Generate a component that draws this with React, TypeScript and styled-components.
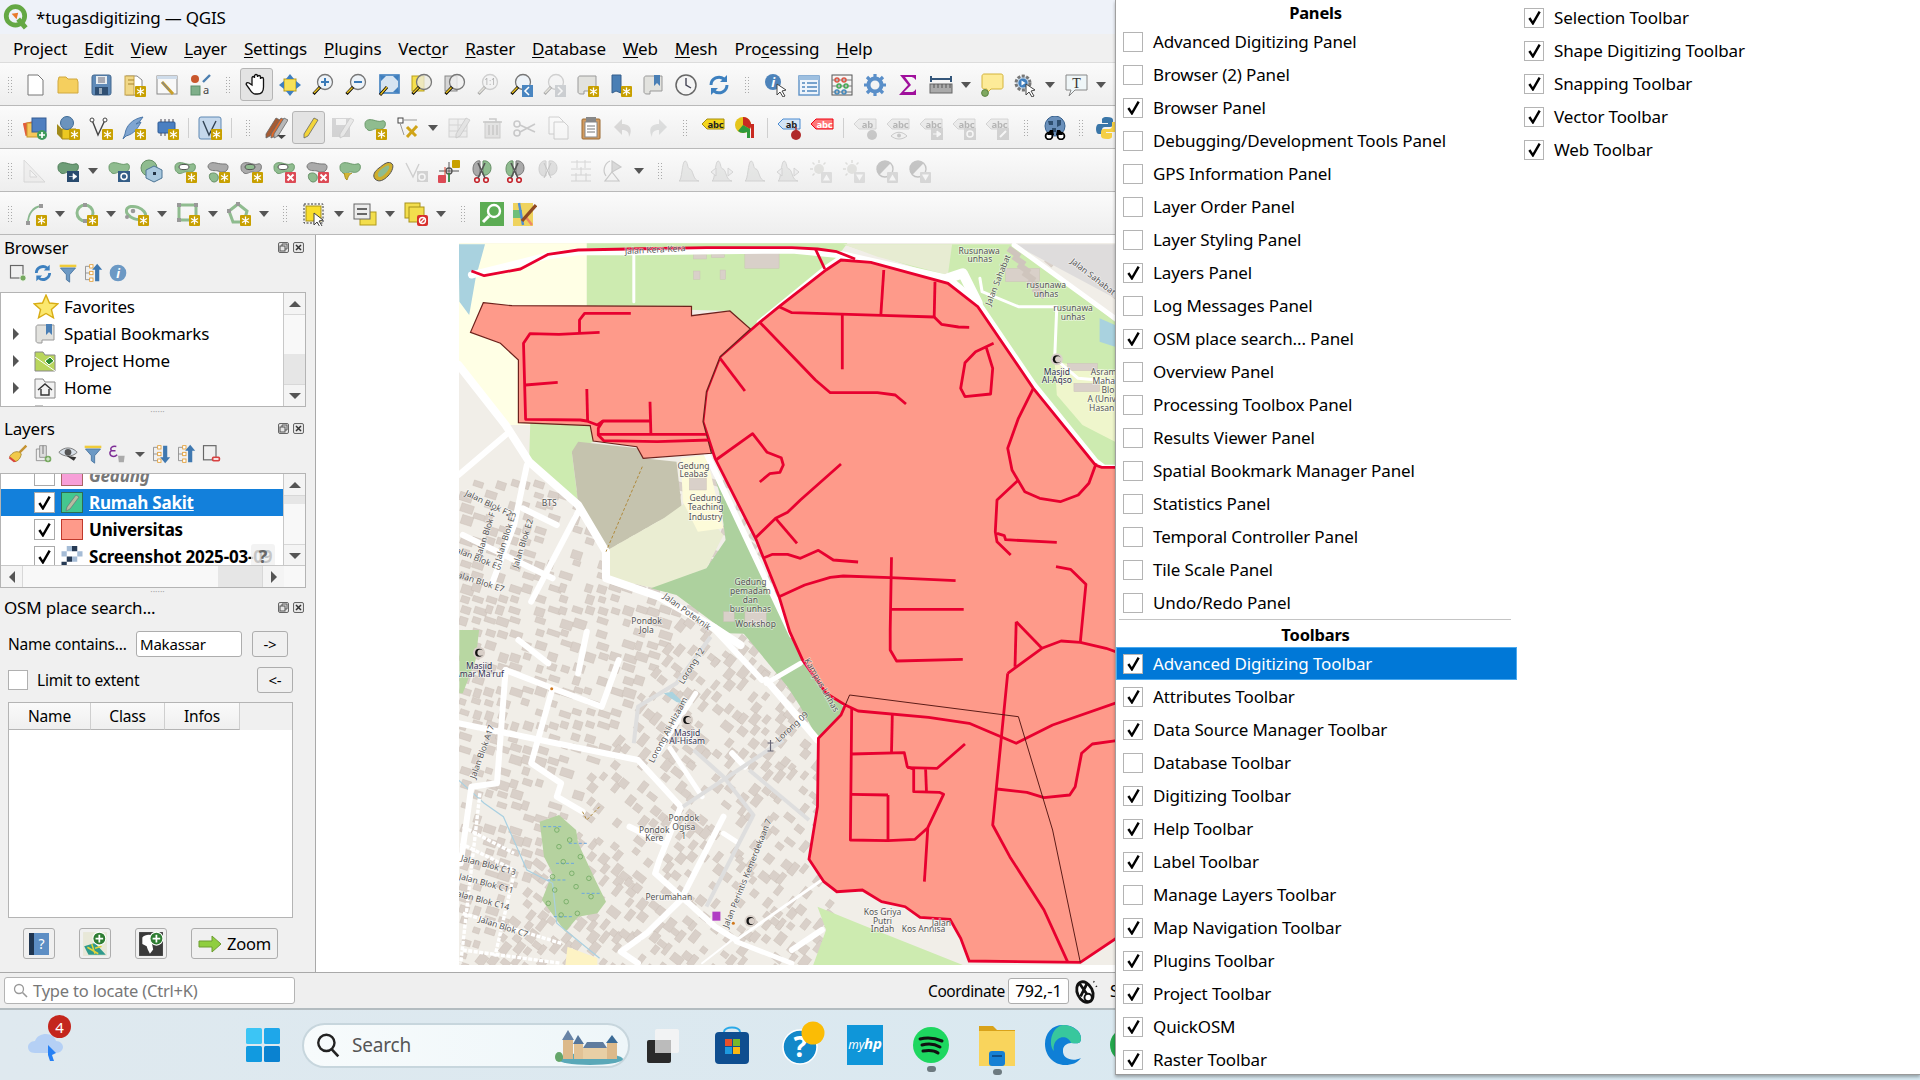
import React from "react";
import styled, { createGlobalStyle } from "styled-components";

const FONT = `"Noto Sans", "Open Sans", "Liberation Sans", sans-serif`;

const Global = createGlobalStyle`
  html, body { margin: 0; padding: 0; background: #f0f0f0; }
  * { box-sizing: border-box; }
`;

/* ---------- page frame ---------- */
const Page = styled.div`
  position: relative; width: 1920px; height: 1080px; overflow: hidden;
  font-family: ${FONT}; font-size: 17px; color: #000; letter-spacing: -0.2px;
`;
const TitleBar = styled.div`
  height: 34px; background: #eef2f9; display: flex; align-items: center; padding-left: 3px; gap: 7px; font-size: 17px;
`;
const MenuBar = styled.div`
  height: 29px; background: #f0f0f0; display: flex; align-items: center; padding-left: 13px; gap: 17px; border-bottom: 1px solid #dcdcdc;
`;
const MenuLabel = styled.span` u { text-underline-offset: 2px; } `;

const ToolRow = styled.div`
  height: 43px; display: flex; align-items: center; padding: 1px 0 0 2px; overflow: hidden;
  background: linear-gradient(#fbfbfb, #eeeeee); border-bottom: 1.5px solid #b9b9b9;
`;
const ToolSlot = styled.span<{ $off?: boolean; $on?: boolean }>`
  flex: none; width: 33px; height: 33px; display: flex; align-items: center; justify-content: center; border-radius: 3px;
  ${p => p.$on ? "background:#e3e3e3; border:1px solid #b5b5b5;" : ""}
  svg { display: block; ${p => p.$off ? "opacity:.3; filter:grayscale(.85);" : ""} }
`;
const Caret = styled.span`
  flex: none; width: 18px; display: flex; justify-content: center;
  &::after { content: ""; border-left: 5.5px solid transparent; border-right: 5.5px solid transparent; border-top: 6px solid #555; }
`;
const GripSlot = styled.span<{ $w: number }>`
  flex: none; width: ${p => p.$w}px; display: flex; justify-content: center;
  &::after { content: ""; width: 6px; height: 18px; background: radial-gradient(circle, #aaa 0.7px, transparent 0.9px) 0 0 / 3px 3px; }
`;
const SepSlot = styled.span`
  flex: none; width: 10px; display: flex; justify-content: center;
  &::after { content: ""; width: 1px; height: 20px; background: #cfcfcf; }
`;

const Workspace = styled.div` height: 737px; display: flex; `;
const Dock = styled.div`
  width: 316px; flex: none; background: #f0f0f0; border-right: 1px solid #a9a9a9; display: flex; flex-direction: column;
`;
const DockTitle = styled.div`
  height: 24px; padding: 0 6px 0 4px; display: flex; align-items: center; justify-content: space-between; font-size: 17px; flex: none;
`;
const DockButtons = styled.span` display: flex; gap: 4px; margin-right: 5px; `;
const MiniRow = styled.div` height: 28px; display: flex; align-items: center; padding-left: 8px; gap: 5px; flex: none; `;
const MiniIcon = styled.span` width: 20px; height: 20px; flex: none; svg { display: block; } `;
const MiniCaret = styled(Caret)` width: 13px; margin: 0; &::after{ border-left-width:5px; border-right-width:5px; border-top-width:5px;} `;

const TreeBox = styled.div<{ $mt: number }>`
  position: relative; height: 115px; flex: none; margin-top: ${p => p.$mt}px; width: 306px; background: #fff; border: 1px solid #b4b4b4; overflow: hidden; display: flex;
`;
const TreeBody = styled.div` flex: 1; min-width: 0; overflow: hidden; `;
const TreeRow = styled.div` height: 27px; display: flex; align-items: center; position: relative; white-space: nowrap; `;
const Expander = styled.span<{ $show?: boolean }>`
  width: 32px; flex: none; padding-left: 12px; display: flex;
  &::after { content: ""; ${p => p.$show ? "border-left: 6px solid #555;" : ""} border-top: 6px solid transparent; border-bottom: 6px solid transparent; }
`;
const TreeIcon = styled.span` width: 31px; flex: none; display:flex; svg{display:block;} `;
const VBar = styled.div<{ $short?: boolean }>`
  width: 22px; flex: none; border-left: 1px solid #c8c8c8; background: #f8f8f8; display: flex; flex-direction: column; ${p => p.$short ? "margin-bottom: 21px;" : ""}
`;
const BarBtn = styled.span<{ $dir: "up" | "down" | "left" | "right" }>`
  flex: none; width: 21px; height: 21px; display: flex; align-items: center; justify-content: center; background: #f4f4f4;
  &::after { content: ""; ${p => p.$dir === "up" ? "border-left:6px solid transparent;border-right:6px solid transparent;border-bottom:6px solid #555;" :
    p.$dir === "down" ? "border-left:6px solid transparent;border-right:6px solid transparent;border-top:6px solid #555;" :
    p.$dir === "left" ? "border-top:6px solid transparent;border-bottom:6px solid transparent;border-right:6px solid #555;" :
    "border-top:6px solid transparent;border-bottom:6px solid transparent;border-left:6px solid #555;"} }
`;
const BarTrack = styled.span<{ $top: number; $len: number }>`
  flex: 1; background: linear-gradient(to bottom, transparent ${p => p.$top}px, #e6e6e6 ${p => p.$top}px, #e6e6e6 ${p => p.$top + p.$len}px, transparent ${p => p.$top + p.$len}px);
  border-top: 1px solid #d8d8d8; border-bottom: 1px solid #d8d8d8;
`;
const HBar = styled.div`
  position: absolute; left: 0; right: 0; bottom: 0; height: 22px; display: flex; align-items: center; background: #f8f8f8; border-top: 1px solid #c8c8c8;
`;
const HTrack = styled.span` flex: 1; height: 100%; background: linear-gradient(to right, transparent 195px, #e6e6e6 195px, #e6e6e6 242px, transparent 242px); border-left: 1px solid #d8d8d8; border-right: 1px solid #d8d8d8; `;
const HCorner = styled.span` width: 21px; flex: none; `;
const Splitter = styled.div<{ $h: number }>`
  height: ${p => p.$h}px; flex: none; display: flex; align-items: center; justify-content: center;
  &::after { content: "······"; color: #aaa; font-size: 9px; letter-spacing: 0; line-height: 1; }
`;
const LayerRows = styled.div` margin-top: -12px; `;
const LayerRow = styled(TreeRow)<{ $sel?: boolean }>`
  padding-left: 33px; gap: 6px; font-weight: 700; ${p => p.$sel ? "background:#1380db; color:#fff;" : ""}
`;
const LayerCheck = styled.span`
  width: 21px; height: 21px; flex: none; background: #fff; border: 1px solid #aaa; display: flex; align-items: center; justify-content: center;
`;
const LayerName = styled.span<{ $muted?: boolean; $active?: boolean }>`
  ${p => p.$muted ? "color:#777; font-style:italic;" : ""} ${p => p.$active ? "text-decoration: underline;" : ""}
`;
const Swatch = styled.span<{ $c: string; $b: string }>` width: 22px; height: 21px; flex: none; background: ${p => p.$c}; border: 1px solid ${p => p.$b}; display:flex; align-items:center; justify-content:center; `;
const Tip = styled.span`
  position: absolute; left: 250px; top: 1px; width: 24px; height: 25px; background: rgba(240,240,240,.82); color: #666; border-radius: 3px; text-align: center; font-weight: 700; font-size: 18px; line-height: 25px;
`;

const OsmBody = styled.div` padding: 12px 0 0 8px; display: flex; flex-direction: column; flex: 1; `;
const OsmLine = styled.div<{ $mb: number }>` display: flex; align-items: center; margin-bottom: ${p => p.$mb}px; `;
const OsmLabel = styled.span` width: 128px; flex: none; font-size: 15.5px; `;
const TextInput = styled.span<{ $w: number }>`
  width: ${p => p.$w}px; height: 26px; background: #fff; border: 1px solid #adadad; border-radius: 3px; display: flex; align-items: center; padding-left: 3px; font-size: 15px; flex: none;
`;
const GhostBtn = styled.span<{ $ml: number }>`
  width: 36px; height: 26px; margin-left: ${p => p.$ml}px; background: #f0f0f0; border: 1px solid #adadad; border-radius: 3px; display: flex; align-items: center; justify-content: center; font-size: 15px; flex: none;
`;
const BoxCheck = styled.span` width: 20px; height: 20px; background: #fff; border: 1px solid #b0b0b0; flex: none; `;
const CheckText = styled.span` margin-left: 9px; width: 220px; flex: none; font-size: 15.5px; `;
const ResultTable = styled.div` width: 285px; height: 216px; background: #fff; border: 1px solid #b4b4b4; `;
const HeadRow = styled.div` height: 27px; display: flex; background: #f0f0f0; `;
const HeadCell = styled.span<{ $w: number }>`
  width: ${p => p.$w}px; display: flex; align-items: center; justify-content: center; background: linear-gradient(#fafafa,#efefef); border-right: 1px solid #cfcfcf; border-bottom: 1px solid #b4b4b4; font-size: 15.5px;
`;
const OsmButtons = styled.div` display: flex; margin: 10px 0 0 15px; gap: 24px; `;
const IconBtn = styled.span`
  width: 32px; height: 31px; background: #f0f0f0; border: 1px solid #adadad; border-radius: 3px; display: flex; align-items: center; justify-content: center; flex: none;
`;
const ZoomBtn = styled(IconBtn)` width: 87px; gap: 5px; font-size: 16.5px; `;

const Canvas = styled.div` flex: 1; background: #fff; overflow: hidden; svg { display: block; } `;

const StatusBar = styled.div`
  height: 38px; background: #efefef; border-top: 1px solid #a9a9a9; border-bottom: 2px solid #b3bcc0; display: flex; align-items: center; padding-left: 4px; white-space: nowrap;
`;
const Locator = styled.div`
  width: 291px; height: 27px; background: #fff; border: 1px solid #b4b4b4; border-radius: 3px; display: flex; align-items: center; padding-left: 8px; gap: 5px; color: #777; font-size: 16.5px; flex: none;
`;
const CoordLabel = styled.span` margin-left: 633px; width: 80px; flex: none; font-size: 15.5px; letter-spacing: -0.4px; `;
const CoordInput = styled.span`
  width: 61px; height: 26px; flex: none; background: #fff; border: 1px solid #adadad; border-radius: 3px; display: flex; align-items: center; justify-content: center; font-size: 16.5px;
`;
const ScaleLabel = styled.span` margin-left: 8px; font-size: 16.5px; `;

const Taskbar = styled.div`
  height: 70px; background: linear-gradient(90deg, #dfe9ef, #d6e8f1); display: flex; align-items: center; position: relative;
`;
const TaskIcon = styled.span<{ $w: number; $ml?: number }>` width: ${p => p.$w}px; margin-left: ${p => p.$ml ?? 0}px; flex: none; display: flex; justify-content: center; position: relative; svg { display: block; } `;
const SearchPill = styled.div`
  width: 328px; height: 45px; flex: none; background: linear-gradient(90deg, #f7fbfc, #eef6f9); border: 2px solid #c7d6dd; border-radius: 23px; display: flex; align-items: center; padding-left: 11px; gap: 11px; color: #555; font-size: 19px; margin: 0 0 0 21px; position: relative;
`;
const CastleWrap = styled.span` position: absolute; right: 3px; top: 2px; `;
const Badge = styled.span`
  position: absolute; left: 48px; top: -12px; width: 23px; height: 23px; background: #c4261d; color: #fff; border-radius: 50%; display:flex; align-items:center; justify-content:center; font-size: 15px;
`;
const RunDot = styled.span` position: absolute; left: 50%; bottom: -9px; width: 9px; height: 6px; margin-left: -4px; background: #6d7a80; border-radius: 3px; `;

/* ---------- context menu ---------- */
const ViewMenu = styled.div`
  position: absolute; left: 1115px; top: 0; width: 805px; height: 1075px; background: #fff; border-left: 1px solid #a0a0a0; border-bottom: 1px solid #9a9a9a; box-shadow: 0 2px 3px rgba(0,0,0,.3); display: flex;
`;
const MenuCol = styled.div<{ $w: number; $pt?: number }>` width: ${p => p.$w}px; flex: none; padding-top: ${p => p.$pt ?? 0}px; `;
const MenuHead = styled.div` height: 25px; text-align: center; font-weight: 700; font-size: 16.5px; line-height: 26px; margin-left: -2px; `;
const MenuHeadT = styled(MenuHead)` height: 27px; line-height: 29px; `;
const MenuDivider = styled.div` height: 1px; margin: 0 6px 0 3px; background: #c4c4c4; `;
const MenuRow = styled.div<{ $hi?: boolean }>`
  height: 33px; display: flex; align-items: center; padding-left: 7px; gap: 10px; font-size: 17px; letter-spacing: -0.13px; white-space: nowrap;
  ${p => p.$hi ? "background:#0078d7; color:#fff; outline:1px solid #4aa9ef; outline-offset:-1px;" : ""}
`;
const MenuCheck = styled.span` width: 20px; height: 20px; flex: none; background: #fff; border: 1.5px solid #b4b4b4; display:flex; align-items:center; justify-content:center; `;

const Tick = ({ s = 15 }: { s?: number }) => (
  <svg width={s} height={s} viewBox="0 0 16 16"><path d="M2.5 8.5L6.3 14.2 13.5 1.8" fill="none" stroke="#000" strokeWidth="2.6" /></svg>
);

/* ---------- icon drawings ---------- */
const Gold = () => (
  <g><rect x="13" y="13" width="11" height="11" rx="1" fill="#c8a000" /><path d="M18.5 14.5v8M15 16.5l7 4M22 16.5l-7 4" stroke="#fff" strokeWidth="1.3" /></g>
);
const RedX = () => (
  <g><rect x="13" y="13" width="11" height="11" rx="1" fill="#dc4a55" /><path d="M15.5 15.5l6 6M21.5 15.5l-6 6" stroke="#fff" strokeWidth="2" /></g>
);
const Blob = ({ c = "#8fbc8f", s = "#6b9a6b" }: { c?: string; s?: string }) => (
  <path d="M2 8c0-4 4-5 8-4s6 2 9 1 4 2 3 5-5 4-8 3-6 3-9 1-3-4-3-6z" fill={c} stroke={s} />
);
const Scroll = () => <path d="M5 3h16v15H9v3H6c-2 0-3-1-3-2V5c0-1 1-2 2-2z" fill="#e2e2de" stroke="#999" />;
const Glass = ({ children, fill = "#eef3f8" }: { children?: React.ReactNode; fill?: string }) => (
  <g>
    <circle cx="14" cy="9" r="7.5" fill={fill} stroke="#777" strokeWidth="1.3" />
    {children}
    <path d="M9 14L2.5 21" stroke="#000" strokeWidth="3" /><path d="M8.5 14.5L3 20" stroke="#e8c022" strokeWidth="1.6" />
  </g>
);
const Cursor = () => <path d="M13 11l9 6-4 1 3 5-2 1-3-5-3 3z" fill="#fff" stroke="#444" />;
const AbcTag = ({ c, b, t = "abc", tc = "#222" }: { c: string; b: string; t?: string; tc?: string }) => (
  <g>
    <path d="M1 8l5-5h17v10H6z" fill={c} stroke={b} />
    <text x="14.5" y="11.5" fontSize="9.5" fontWeight="700" textAnchor="middle" fill={tc} fontFamily={FONT}>{t}</text>
  </g>
);
const Pencil = ({ c, dx = 0 }: { c: string; dx?: number }) => (
  <g transform={`translate(${dx} 0)`}><path d="M17 2l4 2-10 16-4 2 0-4z" fill={c} stroke="#666" strokeWidth=".8" /></g>
);
const Scissors = () => (
  <g fill="none" stroke="#c4222a" strokeWidth="1.6"><circle cx="7" cy="21" r="2.3" /><circle cx="16" cy="21" r="2.3" /><path d="M8 19L15 4M15 19L8 4" stroke="#555" /></g>
);
const Hist = ({ arrows }: { arrows?: boolean }) => (
  <g><path d="M2 22c3 0 3-20 6-20s2 8 5 8 3 12 9 12z" fill="#bfc9bf" stroke="#888" />{arrows ? <path d="M1 13l5-4v8zM23 13l-5-4v8z" fill="#dde" stroke="#888" /> : null}</g>
);
const Sun = ({ up }: { up: boolean }) => (
  <g><circle cx="10" cy="10" r="5" fill="#b9b98a" /><path d="M10 1v3M1 10h3M3.5 3.5l2 2M16.5 3.5l-2 2M3.5 16.5l2-2" stroke="#a7a77c" strokeWidth="1.5" /><rect x="12" y="13" width="11" height="11" rx="1" fill="#aaa" /><path d={up ? "M14 21.5l3.5-6 3.5 6z" : "M14 15.5l3.5 6 3.5-6z"} fill="#fff" /></g>
);
const Contrast = ({ up }: { up: boolean }) => (
  <g><circle cx="10" cy="10" r="8" fill="#eee" stroke="#555" strokeWidth="1.4" /><path d="M10 2a8 8 0 0 0-5.6 13.7L15.6 4.3A8 8 0 0 0 10 2z" fill="#555" /><rect x="12" y="13" width="11" height="11" rx="1" fill="#999" /><path d={up ? "M14 21.5l3.5-6 3.5 6z" : "M14 15.5l3.5 6 3.5-6z"} fill="#fff" /></g>
);
const ArcPair = ({ w = 3 }: { w?: number }) => (
  <g fill="none" stroke="#3d80bf" strokeWidth={w}>
    <path d="M4 12a8 8 0 0 1 13-6" /><path d="M20 12a8 8 0 0 1-13 6" />
    <path d="M20 2v7h-7z" fill="#3d80bf" stroke="none" /><path d="M4 22v-7h7z" fill="#3d80bf" stroke="none" />
  </g>
);

const ICONS: Record<string, React.ReactNode> = {
  newdoc: <path d="M5 2h10l5 5v15H5z" fill="#fff" stroke="#777" />,
  folder: <path d="M2 8l1-4h7l2 2h9l1 3v11H2z" fill="#f5cf5e" stroke="#d0a83e" />,
  save: <g><rect x="3" y="2" width="19" height="20" rx="2" fill="#5f8ab8" stroke="#44688f" /><rect x="7" y="3" width="11" height="8" fill="#e9eef2" /><path d="M9 5h7M9 7h7M9 9h7" stroke="#667" /><rect x="6" y="14" width="13" height="8" fill="#2f4f73" /><rect x="10" y="15" width="3" height="6" fill="#9ab" /></g>,
  saveas: <g><path d="M4 3h11l5 4v15H4z" fill="#fff" stroke="#888" /><rect x="3" y="3" width="9" height="19" fill="#f1d888" stroke="#c4a24b" /><path d="M6 7h6M6 11h6" stroke="#a8842c" /><Gold /></g>,
  props: <g><rect x="2" y="3" width="20" height="18" fill="#f8f8f8" stroke="#888" /><rect x="2" y="3" width="20" height="3" fill="#cfdcea" /><path d="M7 9l11 12" stroke="#c89f2a" strokeWidth="3" /><path d="M7 9l7 8" stroke="#888" strokeWidth="1.4" /></g>,
  styles: <g><circle cx="7" cy="6" r="4" fill="#c9572c" /><rect x="3" y="13" width="9" height="9" fill="#7faf8a" stroke="#5c8e6b" /><path d="M15 9l7-7" stroke="#4c7fb0" strokeWidth="2.4" /><text x="15" y="21" fontSize="11" fill="#444" fontFamily={FONT}>a</text></g>,
  pan: <path d="M7 12V5c0-2 2.5-2 2.5 0v-2c0-2 3-2 3 0v1c0-2 3-2 3 0v2c0-2 3-2 3 0v8c0 4-2 7-6 7h-2c-3 0-4-2-6-5l-3-4c-1-2 1-3 2.5-2z" fill="#fff" stroke="#111" strokeWidth="1.3" />,
  panSel: <g><rect x="6" y="6" width="12" height="12" fill="#f7e158" stroke="#b59b1f" /><path d="M12 1l4 5H8zM12 23l4-5H8zM1 12l5-4v8zM23 12l-5-4v8z" fill="#3f7fbf" /></g>,
  zoomIn: <Glass><path d="M10 9h8M14 5v8" stroke="#3a7ab8" strokeWidth="2" /></Glass>,
  zoomOut: <Glass><path d="M10 9h8" stroke="#3a7ab8" strokeWidth="2" /></Glass>,
  zoomFull: <g><rect x="3" y="2" width="19" height="18" fill="#d6e4f1" stroke="#3f7fbf" strokeWidth="1.6" /><path d="M3 2l6 1-5 5zM22 2l-6 1 5 5zM22 20l-6-1 5-5z" fill="#3f7fbf" /><path d="M10 14L3 22" stroke="#000" strokeWidth="3" /><path d="M10 14L3.5 21.5" stroke="#e8c022" strokeWidth="1.5" /></g>,
  zoomSel: <g><rect x="2" y="3" width="12" height="15" fill="#f5df4d" stroke="#b99f1a" /><Glass fill="rgba(235,235,225,.75)" /></g>,
  zoomLayer: <g><rect x="2" y="3" width="12" height="15" fill="#d5d5d5" stroke="#888" /><Glass fill="rgba(240,240,240,.8)" /></g>,
  zoom11: <Glass><text x="14" y="12" fontSize="8.5" textAnchor="middle" fontFamily={FONT}>1:1</text></Glass>,
  zoomLast: <g><Glass /><rect x="13" y="12" width="11" height="12" fill="#4a86c1" /><path d="M20 14l-4 4 4 4" fill="none" stroke="#fff" strokeWidth="1.6" /></g>,
  zoomNext: <g><Glass /><rect x="13" y="12" width="11" height="12" fill="#4a86c1" /><path d="M16 14l4 4-4 4" fill="none" stroke="#fff" strokeWidth="1.6" /></g>,
  newMap: <g><Scroll /><Gold /></g>,
  bookmarkNew: <g><path d="M4 2h9v18l-5-2-4 2z" fill="#4a7fb5" stroke="#345f8c" /><Gold /></g>,
  bookmarks: <g><Scroll /><path d="M13 2h6v11l-3-3-3 3z" fill="#4a7fb5" /></g>,
  clock: <g><circle cx="12" cy="12" r="10" fill="#f4f4f4" stroke="#666" strokeWidth="1.5" /><path d="M12 5v7l5 3" fill="none" stroke="#445" strokeWidth="1.4" /></g>,
  refresh: <ArcPair />,
  identify: <g><circle cx="9" cy="9" r="8" fill="#4d83ba" /><text x="9" y="14" fontSize="13" fontWeight="700" fontStyle="italic" textAnchor="middle" fill="#fff" fontFamily={FONT}>i</text><Cursor /></g>,
  table: <g><rect x="2" y="3" width="20" height="19" fill="#eef4fb" stroke="#5e92c7" strokeWidth="1.4" /><rect x="2" y="3" width="20" height="4" fill="#9dbfe0" /><path d="M5 10h3M10 10h10M5 14h3M10 14h10M5 18h3M10 18h10" stroke="#4f86bf" strokeWidth="1.5" /></g>,
  abacus: <g fill="none"><rect x="2" y="2" width="20" height="20" stroke="#555" /><path d="M2 7h20M2 13h20M2 19h20" stroke="#777" /><circle cx="7" cy="7" r="2" stroke="#d54" strokeWidth="1.5" /><circle cx="14" cy="7" r="2" stroke="#d54" strokeWidth="1.5" /><circle cx="9" cy="13" r="2" stroke="#4a5" strokeWidth="1.5" /><circle cx="16" cy="13" r="2" stroke="#4a5" strokeWidth="1.5" /><circle cx="7" cy="19" r="2" stroke="#48b" strokeWidth="1.5" /><circle cx="14" cy="19" r="2" stroke="#48b" strokeWidth="1.5" /></g>,
  gear: <g><circle cx="12" cy="12" r="6.5" fill="none" stroke="#5a8fc9" strokeWidth="4" /><path d="M12 1v5M12 18v5M1 12h5M18 12h5M4 4l4 4M20 4l-4 4M4 20l4-4M20 20l-4-4" stroke="#5a8fc9" strokeWidth="3.2" /></g>,
  sigma: <path d="M4 2h16v5l-1.5-1.5c-1-1-2-1.5-4-1.5H9l6 8-7 7h7c2 0 3.5-.5 5-3v6H3l9-10z" fill="#a0109c" />,
  ruler: <g><path d="M2 3v6M22 3v6M2 6h20" stroke="#34567a" strokeWidth="2" /><rect x="1" y="11" width="22" height="9" fill="#aaa" stroke="#666" /><path d="M5 11v4M9 11v4M13 11v4M17 11v4M21 11v4" stroke="#555" /></g>,
  tip: <g><path d="M4 1h17c1.5 0 2 1 2 2v11c0 1-1 2-2 2H11l-4 4v-4H4c-1 0-2-1-2-2V3c0-1 1-2 2-2z" fill="#fdeb98" stroke="#d4b43a" /><circle cx="5" cy="20" r="3.4" fill="#7fa860" stroke="#5d8443" /></g>,
  action: <g><circle cx="10" cy="10" r="7" fill="#c6d6e6" stroke="#777" strokeWidth="3" strokeDasharray="3 1.5" /><circle cx="10" cy="10" r="4.6" fill="#3f7fbf" /><path d="M8.5 7.5l4 2.5-4 2.5z" fill="#fff" /><Cursor /></g>,
  annot: <g><path d="M2 2h21v15H11l-6 6 2-6H2z" fill="#eff6f8" stroke="#888" /><text x="12.5" y="14.5" fontSize="14" textAnchor="middle" fontFamily="'Liberation Serif',serif" fill="#333">T</text></g>,

  dsm: <g><rect x="1" y="6" width="13" height="13" fill="#e25d3c" transform="rotate(-12 7 12)" /><rect x="4" y="7" width="13" height="14" fill="#f5c75a" stroke="#c9962a" /><rect x="9" y="2" width="14" height="14" fill="#4f7fc0" stroke="#345d94" /><circle cx="19" cy="19" r="5" fill="#3f9a5a" /><path d="M19 16v6M16 19h6" stroke="#fff" strokeWidth="1.7" /></g>,
  gpkg: <g><path d="M1 8l5 5v10l-5-5z" fill="#a18a1a" /><path d="M6 13h14v10H6z" fill="#ecc821" stroke="#a5881a" /><circle cx="11" cy="7" r="6.5" fill="#6b93bd" stroke="#3e6a95" /><Gold /></g>,
  vertexNew: <g><path d="M3 4l6 15 7-15" fill="none" stroke="#444" strokeWidth="1.4" /><circle cx="3" cy="4" r="2" fill="#fff" stroke="#444" /><circle cx="16" cy="4" r="2" fill="#fff" stroke="#444" /><Gold /></g>,
  feather: <g><path d="M21 1C10 3 4 10 3 18l-2 5 3-3c8-2 12-8 15-14l-5 2 4-3z" fill="#7fa5d1" stroke="#4a76a8" /><Gold /></g>,
  chip: <g><rect x="3" y="6" width="17" height="11" rx="1" fill="#4a7fc1" stroke="#2f5c96" /><path d="M6 3v3M10 3v3M14 3v3M18 3v3M6 17v3M10 17v3" stroke="#445" /><Gold /></g>,
  vnode: <g><rect x="1" y="1" width="22" height="22" rx="2" fill="#c5d8ec" stroke="#5e88b3" /><path d="M5 5l6 14 7-14" fill="none" stroke="#345" strokeWidth="1.4" /><Gold /></g>,
  pencils: <g><Pencil c="#a55b33" dx="-5" /><Pencil c="#e06a2a" /><Pencil c="#b7b7b7" dx="3" /><path d="M13 19h9l-4.5 4z" fill="#444" /></g>,
  pencil: <Pencil c="#f3d53a" />,
  saveEdits: <g><rect x="2" y="2" width="18" height="19" fill="#889" /><rect x="6" y="3" width="10" height="6" fill="#eee" /><Pencil c="#ccc" dx="3" /></g>,
  polyAdd: <g><Blob /><Gold /></g>,
  vertexTool: <g><rect x="2" y="2" width="5" height="5" fill="#fff" stroke="#444" /><path d="M7 4h14M4 7l4 12" stroke="#999" /><path d="M11 11l9 9M21 10L11 21" stroke="#d0a418" strokeWidth="3" /></g>,
  modAttr: <g><rect x="2" y="3" width="18" height="18" fill="#ddd" stroke="#888" /><path d="M2 9h18M2 15h18M11 3v18" stroke="#888" /><Pencil c="#bbb" dx="2" /></g>,
  trash: <g><rect x="5" y="6" width="15" height="16" fill="#c9b8b4" stroke="#776" /><path d="M3 6h19M9 3h7v3M9 9v10M13 9v10M17 9v10" stroke="#665" fill="none" strokeWidth="1.5" /></g>,
  cut: <g fill="none" stroke="#667" strokeWidth="1.6"><circle cx="4" cy="8" r="3" /><circle cx="4" cy="17" r="3" /><path d="M7 9l15 7M7 16l15-8" /></g>,
  copy: <g><path d="M3 1h10l4 4v13H3z" fill="#fff" stroke="#777" /><path d="M8 6h10l4 4v13H8z" fill="#fff" stroke="#777" /></g>,
  paste: <g><rect x="3" y="3" width="18" height="20" rx="1" fill="#d39c60" stroke="#9a6b35" /><rect x="6" y="6" width="12" height="15" fill="#fff" stroke="#888" /><rect x="7" y="1" width="10" height="5" fill="#888" /><path d="M8 10h8M8 13h8M8 16h8" stroke="#777" /></g>,
  undo: <path d="M10 3L2 11l8 8v-5c5 0 7 2 7 7 4-8 1-13-7-13z" fill="#a9938c" />,
  redo: <path d="M14 3l8 8-8 8v-5c-5 0-7 2-7 7-4-8-1-13 7-13z" fill="#9aa" />,
  labelY: <AbcTag c="#f4d61c" b="#a68e10" />,
  pie: <g><circle cx="9" cy="9" r="8" fill="#e5c51b" /><path d="M9 9V1a8 8 0 0 1 7 12z" fill="#c92a21" /><path d="M9 9l7 4a8 8 0 0 1-12 2z" fill="#2e9a3c" /><rect x="13" y="13" width="3" height="9" fill="#2e9a3c" /><rect x="17" y="8" width="3" height="14" fill="#c92a21" /></g>,
  labelPin: <g><AbcTag c="#d5e5f6" b="#4a8bd1" t="ab" /><path d="M19 11v5" stroke="#a33" strokeWidth="1.5" /><circle cx="19" cy="19" r="5" fill="#b02a2a" /></g>,
  labelRed: <AbcTag c="#f77" b="#e01" tc="#fff" />,
  labelPinD: <g><AbcTag c="#d5d5c8" b="#888" t="ab" /><circle cx="19" cy="19" r="5" fill="#666" /></g>,
  labelEye: <g><AbcTag c="#d5d5c8" b="#888" /><path d="M5 20c5-5 11-5 16 0-5 4-11 4-16 0z" fill="#eee" stroke="#666" /><circle cx="13" cy="19.5" r="2" fill="#666" /></g>,
  labelMove: <g><AbcTag c="#d5d5c8" b="#888" /><rect x="12" y="12" width="12" height="12" fill="#888" /><path d="M14 18h4v-3l4 3-4 3v-3" fill="#fff" stroke="#fff" /></g>,
  labelRot: <g><AbcTag c="#d5d5c8" b="#888" /><rect x="12" y="12" width="12" height="12" fill="#888" /><circle cx="18" cy="18" r="3" fill="none" stroke="#fff" strokeWidth="1.5" /></g>,
  labelEdit: <g><AbcTag c="#d5d5c8" b="#888" /><rect x="12" y="12" width="12" height="12" fill="#888" /><path d="M15 21l6-6" stroke="#fff" strokeWidth="2" /></g>,
  globe: <g><circle cx="12" cy="10" r="10" fill="#6a90bb" stroke="#355f8c" /><path d="M5 5h5v4H6zM14 4h4v5l-4 2zM9 12h4v4H9z" fill="#2f4f70" /><circle cx="6" cy="20" r="3.4" fill="#fff" stroke="#000" strokeWidth="1.8" /><circle cx="18" cy="20" r="3.4" fill="#fff" stroke="#000" strokeWidth="1.8" /><path d="M7 14h3l1 5H4zM14 14h3l3 5h-7z" fill="#000" /></g>,
  python: <g><path d="M12 1c-5 0-5 2-5 3v3h6v1H4c-2 0-3 2-3 5s1 5 3 5h3v-4c0-2 1-3 3-3h5c2 0 3-1 3-3V4c0-2-2-3-6-3z" fill="#3a76a8" /><path d="M12 23c5 0 5-2 5-3v-3h-6v-1h9c2 0 3-2 3-5s-1-5-3-5h-3v4c0 2-1 3-3 3H9c-2 0-3 1-3 3v4c0 2 2 3 6 3z" fill="#f5cf45" /></g>,

  triangle: <g><path d="M1 23V1h0l21 22z" fill="#e4e1dc" stroke="#999" /><path d="M7 18v-7l7 7z" fill="#f4f4f4" stroke="#999" /></g>,
  polyMove: <g><Blob c="#6e9e78" s="#4f7d58" /><rect x="11" y="12" width="12" height="11" fill="#284a6e" /><path d="M13 17.5h4v-3l4 3-4 3v-3" fill="#fff" stroke="#fff" strokeWidth=".6" /></g>,
  polyRot: <g><Blob /><rect x="11" y="12" width="12" height="11" fill="#345d86" /><circle cx="17" cy="17.5" r="3" fill="none" stroke="#fff" strokeWidth="1.5" /></g>,
  hexCircle: <g><circle cx="9" cy="9" r="8" fill="#8fbc8f" stroke="#668f66" /><path d="M14 7l8 4v8l-8 4-8-4v-8z" fill="#a8c8de" stroke="#4a7394" /><rect x="13" y="13" width="3" height="3" fill="#234" /></g>,
  ringAdd: <g><Blob /><ellipse cx="11" cy="8" rx="5" ry="2.6" fill="#fff" stroke="#555" /><Gold /></g>,
  partAdd: <g><path d="M2 8c0-4 4-5 8-4s6 1 9 1 4 3 2 6-6 2-9 1-8 1-10-4z" fill="#aaa" stroke="#777" /><path d="M4 15c3-2 7-1 8 2s-1 6-4 6-6-5-4-8z" fill="#8fbc8f" stroke="#668f66" /><Gold /></g>,
  ringFill: <g><Blob c="#aaa" s="#777" /><ellipse cx="11" cy="8" rx="5" ry="2.6" fill="#8fbc8f" stroke="#555" /><Gold /></g>,
  ringDel: <g><Blob /><ellipse cx="11" cy="8" rx="5" ry="2.6" fill="#fff" stroke="#555" /><RedX /></g>,
  partDel: <g><path d="M2 8c0-4 4-5 8-4s6 1 9 1 4 3 2 6-6 2-9 1-8 1-10-4z" fill="#aaa" stroke="#777" /><path d="M4 15c3-2 7-1 8 2s-1 6-4 6-6-5-4-8z" fill="#8fbc8f" stroke="#668f66" /><RedX /></g>,
  reshape: <g><Blob /><path d="M6 14c1 3 1 6 3 7 1-2 1-5 5-7" fill="#d2b533" stroke="#a88c1a" /></g>,
  offset: <g><path d="M4 20c-3-4 0-8 4-11s8-7 12-5 1 9-3 13-9 7-13 3z" fill="#cfae2c" stroke="#555" /><path d="M7 17c-1-3 2-6 5-8s5-3 6-2-1 5-4 8-6 4-7 2z" fill="#8fbc8f" /></g>,
  vertexDis: <g><path d="M2 4l7 14 6-13" fill="none" stroke="#777" strokeWidth="1.4" /><rect x="13" y="12" width="11" height="11" fill="#888" /><circle cx="18" cy="18" r="3" fill="none" stroke="#fff" strokeWidth="1.5" /></g>,
  snap: <g><path d="M2 12h20M12 3v20" stroke="#555" /><circle cx="12" cy="12" r="3" fill="none" stroke="#555" strokeWidth="1.4" /><path d="M8 8v14" stroke="#d43" /><path d="M12 14v9" stroke="#2a8a3c" strokeWidth="1.5" /><rect x="15" y="1" width="8" height="8" rx="1" fill="#c8a000" /><rect x="1" y="16" width="8" height="8" rx="1" fill="#dc4a55" /></g>,
  scissor1: <g><path d="M3 10c0-6 4-9 7-8v15c-4 1-7-2-7-7z" fill="#aaa" stroke="#777" /><path d="M13 2c4-1 8 2 8 7s-4 8-8 7z" fill="#8fbc8f" stroke="#668f66" /><Scissors /></g>,
  scissor2: <g><path d="M3 10c0-6 4-9 7-8v15c-4 1-7-2-7-7z" fill="#8fbc8f" stroke="#668f66" /><path d="M13 2c4-1 8 2 8 7s-4 8-8 7z" fill="#aaa" stroke="#777" /><Scissors /></g>,
  splitDis: <g><path d="M3 10c0-6 4-9 7-8v15c-4 1-7-2-7-7z" fill="#aaa" stroke="#777" /><path d="M13 2c4-1 8 2 8 7s-4 8-8 7z" fill="#aaa" stroke="#777" /><path d="M8 19L15 4M15 19L8 4" stroke="#555" /></g>,
  linesDis: <path d="M2 3h20M2 10h20M2 16h20M2 22h20M8 1v8M16 1v8M12 8v8M7 14v8M17 14v8" stroke="#888" fill="none" />,
  rotDis: <g fill="none" stroke="#666" strokeWidth="1.2"><path d="M8 2a10 10 0 0 0-4 15" /><path d="M10 2l9 6-9 5z" fill="#999" /><path d="M10 13l7 9H3z" /></g>,
  hist1: <Hist />, hist2: <Hist arrows />, hist3: <Hist />, hist4: <Hist arrows />,
  sun1: <Sun up />, sun2: <Sun up={false} />, con1: <Contrast up />, con2: <Contrast up={false} />,

  curve: <g><path d="M5 21c0-9 5-16 13-17" fill="none" stroke="#8ab88f" strokeWidth="1.8" /><rect x="3" y="19" width="4" height="4" fill="#999" /><rect x="16" y="2" width="4" height="4" fill="#999" /><Gold /></g>,
  circleTool: <g><circle cx="11" cy="11" r="8" fill="none" stroke="#8fbc8f" strokeWidth="3" /><rect x="9" y="1" width="4" height="4" fill="#999" /><rect x="9" y="17" width="4" height="4" fill="#999" /><Gold /></g>,
  ellipse: <g><ellipse cx="11" cy="11" rx="10" ry="6" fill="none" stroke="#8fbc8f" strokeWidth="3" transform="rotate(20 11 11)" /><circle cx="8" cy="9" r="2.3" fill="#999" /><circle cx="2" cy="15" r="2" fill="#999" /><Gold /></g>,
  rectTool: <g><rect x="3" y="3" width="17" height="15" fill="none" stroke="#8fbc8f" strokeWidth="3" /><rect x="1" y="1" width="4" height="4" fill="#999" /><rect x="18" y="1" width="4" height="4" fill="#999" /><rect x="1" y="16" width="4" height="4" fill="#999" /><Gold /></g>,
  penta: <g><path d="M11 2l9 7-3 11H6L2 9z" fill="none" stroke="#8fbc8f" strokeWidth="3" /><rect x="9" y="0" width="4" height="4" fill="#999" /><rect x="0" y="7" width="4" height="4" fill="#999" /><Gold /></g>,
  select: <g><rect x="2" y="2" width="19" height="19" fill="none" stroke="#333" strokeDasharray="2 1.5" /><rect x="4" y="4" width="15" height="15" fill="#f9de2c" stroke="#a8921a" /><path d="M12 11l9 7-4 1 3 5-2 1-3-5-3 3z" fill="#fff" stroke="#444" /></g>,
  selTable: <g><rect x="7" y="10" width="16" height="13" fill="#f3de4d" stroke="#b09a1c" /><rect x="1" y="2" width="16" height="15" fill="#ececec" stroke="#666" /><path d="M4 7h10M4 12h10" stroke="#666" strokeWidth="2" /></g>,
  deselect: <g><rect x="1" y="1" width="15" height="15" fill="#f3de4d" stroke="#a8921a" /><rect x="5" y="5" width="15" height="15" fill="#f3de4d" stroke="#a8921a" /><rect x="13" y="13" width="11" height="11" rx="2" fill="#d7302d" /><circle cx="18.5" cy="18.5" r="3" fill="none" stroke="#fff" strokeWidth="1.4" /><path d="M16 21l5-5" stroke="#fff" strokeWidth="1.4" /></g>,
  osmSearch: <g><rect x="0" y="0" width="24" height="24" fill="#5cac54" /><circle cx="14" cy="9" r="6" fill="none" stroke="#fff" strokeWidth="2.4" /><path d="M9 14l-6 6" stroke="#fff" strokeWidth="3" /></g>,
  editMap: <g><rect x="0" y="1" width="20" height="23" fill="#efd35e" /><path d="M0 8h9v8H0z" fill="#6fbf7a" /><path d="M6 1l4 22" stroke="#4f8ed6" strokeWidth="2.4" /><path d="M12 14l7 9" stroke="#e86" strokeWidth="2.4" /><path d="M9 19L23 3" stroke="#8f4a22" strokeWidth="3.4" /></g>,
};

const ToolIcon = ({ id, size = 24 }: { id: string; size?: number }) => (
  <svg width={size} height={size} viewBox="0 0 24 24">{ICONS[id]}</svg>
);

const MINI: Record<string, React.ReactNode> = {
  newTree: <g><rect x="3" y="3" width="15" height="15" fill="none" stroke="#666" strokeWidth="1.4" /><circle cx="18" cy="18" r="3.8" fill="#76a95f" stroke="#fff" /></g>,
  filter: <g><path d="M2 2h20v3H2z" fill="#f0cc3a" /><path d="M3 6h18l-7 8v9l-4-3v-6z" fill="#6c99c4" stroke="#44719e" /></g>,
  collapse: <g><path d="M3 4h6M3 12h6M3 20h6M3 4v16" stroke="#888" fill="none" /><rect x="8" y="2" width="4" height="4" fill="#fff" stroke="#e19a2e" /><rect x="8" y="10" width="4" height="4" fill="#fff" stroke="#e19a2e" /><rect x="8" y="18" width="4" height="4" fill="#fff" stroke="#e19a2e" /><path d="M17 1l6 7h-3.5v14h-5V8H11z" fill="#3f78b0" /></g>,
  expand: <g><path d="M3 4h6M3 12h6M3 20h6M3 4v16" stroke="#888" fill="none" /><rect x="8" y="2" width="4" height="4" fill="#fff" stroke="#e19a2e" /><rect x="8" y="10" width="4" height="4" fill="#fff" stroke="#e19a2e" /><rect x="8" y="18" width="4" height="4" fill="#fff" stroke="#e19a2e" /><path d="M17 23l6-7h-3.5V2h-5v14H11z" fill="#3f78b0" /></g>,
  info: <g><circle cx="12" cy="12" r="10" fill="#6c99c4" /><text x="12" y="18" fontSize="15" fontWeight="700" fontStyle="italic" textAnchor="middle" fill="#fff" fontFamily={FONT}>i</text></g>,
  brush: <g><path d="M14 10l8-8" stroke="#c59332" strokeWidth="3" /><path d="M2 15c3-5 8-7 12-5l2 2c-1 5-4 9-8 9z" fill="#f1c94a" stroke="#a4842a" /><path d="M2 15l8 6-3 1-6-5z" fill="#d9463f" /></g>,
  addGroup: <g><path d="M4 6h11v14H4z" fill="#eee" stroke="#888" /><path d="M8 2h8v14H8z" fill="#ddd" stroke="#888" /><path d="M12 2v10" stroke="#666" /><circle cx="18" cy="18" r="4" fill="#76a95f" /><path d="M18 15.5v5M15.5 18h5" stroke="#fff" /></g>,
  eye: <g><path d="M1 10c6-7 16-7 22 0-6 6-16 6-22 0z" fill="#d8e0e8" stroke="#666" /><circle cx="12" cy="10" r="4" fill="#555" /><path d="M10 14l12 2-3 4z" fill="#333" /></g>,
  epsilon: <g><path d="M10 3C5 2 2 5 4 8c-3 2-2 7 3 7 2 0 3-1 4-2M4 8h5" fill="none" stroke="#7d2d96" strokeWidth="1.7" /><path d="M12 14h8l-1 8h-6z" fill="#aaa" /></g>,
  remove: <g><rect x="3" y="2" width="15" height="17" fill="none" stroke="#666" strokeWidth="1.4" /><rect x="13" y="15" width="10" height="6" rx="2" fill="#d84242" /><rect x="15" y="17" width="6" height="2" fill="#fff" /></g>,
};
const Mini = ({ id }: { id: string }) => <MiniIcon><svg width={20} height={20} viewBox="0 0 24 24">{id === "refresh" ? <ArcPair w={3.4} /> : MINI[id]}</svg></MiniIcon>;

const QgisLogo = () => (
  <svg width="26" height="26" viewBox="0 0 24 24">
    <circle cx="11.5" cy="11" r="8.5" fill="none" stroke="#64a844" strokeWidth="4.4" />
    <path d="M14 14l7 8" stroke="#64a844" strokeWidth="4.6" />
    <path d="M8 9l6-1-1.5 6z" fill="#e8792b" />
  </svg>
);
const DockBtns = () => (
  <DockButtons>
    <svg width="11" height="11" viewBox="0 0 11 11"><rect x=".5" y=".5" width="10" height="10" rx="1.5" fill="#e5e5e5" stroke="#666" /><rect x="2" y="4" width="5" height="5" fill="none" stroke="#555" /><path d="M4 4V2h5v5H7" fill="none" stroke="#555" /></svg>
    <svg width="11" height="11" viewBox="0 0 11 11"><rect x=".5" y=".5" width="10" height="10" rx="1.5" fill="#e5e5e5" stroke="#666" /><path d="M3 3l5 5M8 3l-5 5" stroke="#333" strokeWidth="1.5" /></svg>
  </DockButtons>
);

/* ---------- toolbars ---------- */
const ROWS: string[][] = [
  ["g16", "newdoc", "folder", "save", "saveas", "props", "styles", "g24", "+pan", "panSel", "zoomIn", "zoomOut", "zoomFull", "zoomSel", "zoomLayer", "-zoom11", "zoomLast", "-zoomNext", "newMap", "bookmarkNew", "bookmarks", "clock", "refresh", "g24", "identify", "table", "abacus", "gear", "sigma", "ruler", "v", "tip", "action", "v", "annot", "v"],
  ["g16", "dsm", "gpkg", "vertexNew", "feather", "chip", "s", "vnode", "s", "g23", "pencils", "+pencil", "-saveEdits", "polyAdd", "vertexTool", "v", "-modAttr", "-trash", "-cut", "-copy", "paste", "-undo", "-redo", "g23", "labelY", "pie", "s", "labelPin", "labelRed", "s", "-labelPinD", "-labelEye", "-labelMove", "-labelRot", "-labelEdit", "g25", "globe", "g19", "python"],
  ["g16", "-triangle", "polyMove", "v", "polyRot", "hexCircle", "ringAdd", "partAdd", "ringFill", "ringDel", "partDel", "reshape", "offset", "-vertexDis", "snap", "scissor1", "scissor2", "-splitDis", "-linesDis", "-rotDis", "v", "g24", "-hist1", "-hist2", "-hist3", "-hist4", "-sun1", "-sun2", "-con1", "-con2"],
  ["g16", "curve", "v", "circleTool", "v", "ellipse", "v", "rectTool", "v", "penta", "v", "g24", "select", "v", "selTable", "v", "deselect", "v", "g25", "osmSearch", "editMap"],
];
const Toolbar = ({ items }: { items: string[] }) => (
  <ToolRow>
    {items.map((it, i) => {
      if (it === "v") return <Caret key={i} />;
      if (it === "s") return <SepSlot key={i} />;
      if (/^g\d+$/.test(it)) return <GripSlot key={i} $w={Number(it.slice(1))} />;
      const off = it[0] === "-", on = it[0] === "+";
      const id = off || on ? it.slice(1) : it;
      return <ToolSlot key={i} $off={off} $on={on}><ToolIcon id={id} /></ToolSlot>;
    })}
  </ToolRow>
);

/* ---------- map ---------- */
const fx = (x: number) => 450 + x / 2.34;
const fy = (y: number) => 235 + y / 3;
const P = (a: number[], dy = 0) => {
  const out: string[] = [];
  for (let i = 0; i < a.length; i += 2) out.push(`${fx(a[i]).toFixed(1)},${fy(a[i + 1] + dy).toFixed(1)}`);
  return out.join(" ");
};
const D6 = 1185;
const BIG = [915,75,985,82,1165,145,1235,215,1365,460,1510,690,1525,697,1640,697,1640,2040,1475,2182,1215,2178,1195,2110,1170,2053,1100,2047,1065,2015,1010,2000,965,1965,905,1970,875,1940,840,1873,860,1715,862,1510,915,1440,925,1410,880,1375,825,1275,795,1190,770,1085,715,910,620,670,592,560,600,470,632,365,725,262,770,215,880,105];
const LEFT = [78,203,145,212,565,214,565,242,655,228,703,282,632,365,600,470,592,560,612,655,452,670,437,635,335,618,328,572,160,563,160,375,118,325,48,292];
const RED5: number[][] = [
  [50,108,80,122,165,102,230,58,300,45,420,42,600,38,800,38,860,42,905,50,948,72],[855,42,877,102],
  [770,215,800,233,1010,241,1133,246,1150,268,1190,276,1215,277],[1015,105,1008,241],[1135,140,1133,246],[918,240,918,403],
  [725,262,855,435,890,473,1000,473,1042,480,1067,507],[632,370,690,468],
  [1272,325,1230,350,1205,383,1195,460,1205,485,1265,477,1270,400,1255,338],
  [1365,460,1330,550,1305,640,1315,705,1345,770,1380,790,1428,800,1470,780,1495,745,1512,685],
  [1330,735,1280,795,1276,890,1280,920,1312,960],[1280,895,1297,902,1300,914,1420,922],
  [622,675,708,596,742,652,775,668,780,690,772,712,748,716,725,741],
  [915,687,820,795,790,832,762,850,715,908],[762,850,812,925],
  [732,970,755,958,790,958,820,970,862,946,897,975,955,981],
  [770,1085,830,1050,890,1027,920,1023,1030,1028,1183,1037],
  [1033,967,1030,1185,1030,1245,1045,1278,1200,1273],[1030,1123,1202,1123],
  [1418,995,1452,1003,1488,1048,1475,1222],[1325,1160,1322,1295],[1325,1160,1385,1240],
  [423,235,315,235,303,255,303,293],
  [350,292,255,298,187,296,172,325,177,553,305,555,320,558,345,570,358,558,470,558],
  [177,450,252,442],[320,462,322,558],[468,500,470,598],
  [358,558,347,580,347,600,360,617,485,620,608,615],[348,598,600,598],
];
const RED6: number[][] = [
  [1305,130,1385,55,1430,33,1475,37,1535,55,1600,85],[1305,130,1270,585,1310,680,1390,840,1445,995],
  [925,225,955,243,1120,262,1215,280,1325,340,1410,285,1600,200],
  [940,235,937,630,1025,632,1088,628,1118,593,1155,493,1145,487,1085,485,1085,418,1070,410,1063,368,940,372],
  [1035,255,1033,368],[1025,495,1025,630],[940,493,1025,495],[1070,413,1140,415,1205,342],[1113,418,1115,487],[1118,593,1110,755],
  [1280,477,1350,487,1390,503,1450,495,1463,470,1478,370,1503,342,1600,325],
];
const ROADS5: [number[], number][] = [
  [[50,120,230,62,300,50,430,50,800,45,920,60,1165,130,1235,205,1365,450,1510,680,1530,700,1560,700],7],
  [[725,262,880,100,920,65],6],[[430,50,430,200],3],
  [[20,390,130,570,185,680,300,810,365,950,365,1030,490,1085,620,1180,680,1230],8],
  [[600,655,800,1200],6],[[130,600,20,720],6],[[180,690,150,870,100,1040],6],[[170,820,250,870],6],[[30,900,240,1030],6],[[300,830,190,1100],6],
  [[1240,130,1245,170,1330,215,1420,215,1415,370,1470,430,1560,440],3],[[1320,30,1556,250],5],[[1165,130,1200,115,1235,205],10],
];
const ROADS6: [number[], number][] = [
  [[320,5,300,130],6],[[160,30,230,100],6],[[130,120,240,175,355,230,395,90],6],[[240,175,190,400,260,460,250,500,310,545],6],
  [[20,280,440,390,540,530,490,690,480,730,620,890,670,930],6],[[640,560,540,810,460,910,400,965,440,1000],6],[[420,590,500,640],6],[[640,610,670,635],5],
  [[575,190,480,380],5],[[515,355,590,500],5],[[660,370,690,410],6],[[740,150,860,330],7],[[620,0,730,150],6],[[670,930,870,750],3],[[660,930,590,1000],2],[[670,935,800,1000],5],
  [[130,120,110,460,50,470,25,700],6],[[740,160,820,100],5],[[800,960,870,900],6],
];
const FOOT6: number[][] = [
  [430,340,440,230,530,160,610,20],[545,530,780,330],[700,420,840,570],[600,830,710,555,640,440,570,360],
];
const FOOTW6: number[][] = [[70,490,25,1000],[30,590,150,670],[25,640,150,720],[30,850,260,940],[30,960,260,1000],[150,730,105,980]];
type Lbl = [string, number, number, number?, string?];
const LABELS5: Lbl[] = [
  ["Jalan Kera-Kera",480,44,-3],["Rusunawa",1238,47],["unhas",1240,73],["Jalan Sahabat",1282,135,-68],["Jalan Sahabat",1505,125,38],
  ["rusunawa",1395,150],["unhas",1395,178],["rusunawa",1458,218],["unhas",1458,245],["Masjid",1420,410,0,"#335"],["Al-Aqso",1420,434,0,"#335"],
  ["Asrama",1535,410],["Maha",1530,437],["Blok",1545,465],["A (Univ",1525,492],["Hasan",1525,520],
  ["Gedung",570,692],["Leabas",570,718],["Gedung",598,790],["Teaching",598,817],["Industry",598,845],["BTS",232,803],
  ["Jalan Blok F2",90,805,26],["Jalan Blok F1",85,890,-72],["Jalan Blok E3",130,905,-72],["Jalan Blok E2",170,925,-72],["Jalan Blok E5",65,970,22],["Jalan Blok E7",70,1040,18],
  ["Jalan Poteknik",555,1130,36],["Gedung",703,1040],["pemadam",703,1068],["dan",703,1095],["bus unhas",703,1123],["Workshop",715,1168],["Pondok",460,1158],["Jola",460,1185],
];
const LABELS6: Lbl[] = [
  ["Masjid",68,108,0,"#335"],["Amar Ma'ruf",68,133,0,"#335"],["Jalan Blok A17",75,365,-70],["Lorong 12",565,108,-58],["Lorong Ali Hizaam",510,300,-62],
  ["Masjid",555,308,0,"#335"],["Al-Hisam",555,332,0,"#335"],["Lorong 09",800,290,-42],["Pondok",547,565],["Ogisa",547,592],["1",547,618],["Pondok",478,600],["Kere",478,625],
  ["Perumahan",512,800],["Jalan Perintis Kemerdekaan 7",695,730,-68],["Jalan Blok C13",90,705,15],["Jalan Blok C11",85,760,15],["Jalan Blok C14",75,810,15],["Jalan Blok C7",125,890,18],
  ["Kos Griya",1012,845],["Putri",1012,872],["Indah",1012,898],["Kos Annisa",1108,897],["Jalan",1150,878],["Kampus Unhas",870,165,60],
];
const rng = (seed: number) => { let s = seed; return () => (s = (s * 16807) % 2147483647) / 2147483647; };
const BUILDINGS = (() => {
  const r = rng(4242), out: { x: number; y: number; w: number; h: number; a: number }[] = [];
  for (let x = 460; x < 830; x += 12.5) for (let y = 478; y < 968; y += 11.5) {
    if (r() < 0.3) continue;
    const zoneA = (x - 460) * 0.5 + (y - 480) * 0.3;
    out.push({ x: x + r() * 3, y: y + r() * 3, w: 6 + r() * 7, h: 5 + r() * 4, a: zoneA < 150 ? 18 : -52 + (r() < 0.3 ? 90 : 0) });
  }
  for (let x = 1010; x < 1120; x += 13) for (let y = 245; y < 300; y += 11) {
    if (x - 1010 > (y - 243) * 2.1 + 5 && r() < 0.9) out.push({ x, y, w: 9, h: 7, a: 40 });
  }
  return out;
})();
const Mosque = ({ x, y, d = 0 }: { x: number; y: number; d?: number }) => (
  <g transform={`translate(${fx(x).toFixed(1)} ${fy(y + d).toFixed(1)})`}>
    <circle r="6" fill="#d9d0c9" /><circle r="4" fill="#111" /><circle cx="1.4" r="3.1" fill="#d9d0c9" />
  </g>
);
const MapLabels = ({ list, d = 0 }: { list: Lbl[]; d?: number }) => (
  <>
    {list.map(([t, x, y, rot = 0, c = "#555"], i) => (
      <text key={i} x={fx(x)} y={fy(y + d) + 3} fontSize="8.5" textAnchor="middle" fill={c} stroke="#fff" strokeOpacity=".55" strokeWidth="1.4" paintOrder="stroke"
        fontFamily={FONT} letterSpacing="0" transform={rot ? `rotate(${rot} ${fx(x)} ${fy(y + d)})` : undefined}>{t}</text>
    ))}
  </>
);
const OsmMap = () => (
  <svg width="804" height="737" viewBox="316 235 804 737">
    <defs><clipPath id="tile"><rect x="459" y="243" width="662" height="722" /></clipPath></defs>
    <g clipPath="url(#tile)">
      <rect x="459" y="243" width="662" height="722" fill="#f1eee8" />
      {BUILDINGS.map((b, i) => <rect key={i} x={b.x} y={b.y} width={b.w} height={b.h} fill="#d9d0c9" stroke="#c9bdb4" strokeWidth=".4" transform={`rotate(${b.a} ${b.x} ${b.y})`} />)}
      <polygon points={P([20,25,320,25,320,570,160,570,130,570,20,390])} fill="#ffffe5" />
      <polygon points={P([320,25,930,25,880,110,700,285,655,228,320,215])} fill="#cdebb0" />
      <polygon points={P([188,560,335,570,335,620,285,650,300,805,185,680])} fill="#cdebb0" />
      <polygon points={P([300,620,440,640,452,670,530,680,545,850,500,850,362,950,300,800,285,650])} fill="#c5c3ae" />
      <polygon points={P([362,950,500,850,565,790,640,900,600,1000,480,1060,370,1030])} fill="#eaedd2" />
      <polygon points={P([605,665,800,1200,650,1195,530,1080,470,1060,600,1000,645,915,630,770])} fill="#add19e" />
      <polygon points={P([540,670,600,660,640,880,580,890,545,800])} fill="#fdfbd9" />
      <polygon points={P([920,28,1330,28,1556,260,1556,690,1520,695,1365,450,1235,205,1165,130])} fill="#cdebb0" />
      <polygon points={P([920,28,1175,28,1165,120,1000,65])} fill="#e7ecd2" />
      <polygon points={P([1320,28,1556,28,1556,190])} fill="#dedcdc" />
      <polygon points={P([20,28,82,28,60,130,45,240,22,200])} fill="#a9d2df" />
      <polygon points={P([1520,250,1556,270,1556,335,1520,320])} fill="#a9d2df" />
      <polygon points={P([1415,380,1556,410,1556,620,1480,570,1420,480])} fill="#fdfbd9" opacity=".7" />
      {[[570,58,30,14],[612,58,30,10],[690,50,80,50],[570,108,15,25],[632,105,13,28],[1300,100,80,40],[1445,385,70,22],[1460,445,60,25],[560,730,40,35],[640,1130,25,30],[690,1130,50,40]].map(([x,y,w,h],i) => (
        <rect key={i} x={fx(x)} y={fy(y)} width={w/2.34} height={h/3} fill="#d9d0c9" stroke="#c9bdb4" strokeWidth=".4" />
      ))}
      {[0,1,2,3,4,5].map(i => <rect key={i} x={1010 + i * 5} y={246 + i * 8} width="14" height="6" fill="#cfc5bd" transform={`rotate(35 ${1010 + i * 5} ${246 + i * 8})`} />)}
      <polygon points={P([210,575,255,555,295,600,300,640,340,750,365,815,345,850,300,860,270,905,215,810,240,730,220,680],D6)} fill="#b5d29f" />
      <polygon points={P([22,0,68,0,60,90,30,190,22,190],D6)} fill="#b8d7a2" />
      <polygon points={P([680,0,800,0,925,240,860,325,820,230,790,170,700,30],D6)} fill="#add19e" />
      <polygon points={P([860,830,965,885,1200,1005,850,1005,880,900],D6)} fill="#cdebb0" />
      <polygon points={P([275,950,345,985,345,1005,270,1005],D6)} fill="#fdf3c4" />
      <polygon points={P([500,190,520,185,550,222,530,216],D6)} fill="#aad3df" />
      <path d={"M" + P([20,450,80,520,125,560,180,720,240,760,250,880,350,985],D6)} fill="none" stroke="#a9d0e1" strokeWidth="1.2" />
      {[[240,590],[300,640],[270,700],[250,750],[330,790],[265,860]].map(([x,y],i) => <path key={i} d={`M${fx(x-22)} ${fy(y+D6)}h18`} stroke="#6aa6e0" strokeWidth="1" strokeDasharray="3 2" />)}
      {[[250,600],[280,630],[255,650],[305,680],[265,695],[240,740],[285,730],[325,745],[245,780],[295,770],[230,820],[272,815],[330,800],[260,855],[298,850]].map(([x,y],i) => (
        <circle key={i} cx={fx(x)} cy={fy(y+D6)} r="2.3" fill="none" stroke="#6fa861" strokeWidth=".8" />
      ))}
      {ROADS5.map(([a, w], i) => <polyline key={i} points={P(a)} fill="none" stroke="#fff" strokeWidth={w} strokeLinejoin="round" strokeLinecap="round" />)}
      {ROADS6.map(([a, w], i) => <polyline key={i} points={P(a, D6)} fill="none" stroke="#fff" strokeWidth={w} strokeLinejoin="round" strokeLinecap="round" />)}
      {FOOT6.map((a, i) => <polyline key={i} points={P(a, D6)} fill="none" stroke="#dedede" strokeWidth="4" strokeLinejoin="round" />)}
      {FOOTW6.map((a, i) => <polyline key={i} points={P(a, D6)} fill="none" stroke="#fff" strokeWidth="3.4" strokeDasharray="4 1.5" />)}
      <polyline points={P([450,695,365,950])} fill="none" stroke="#b08a3c" strokeWidth="1" strokeDasharray="3 2" />
      <polyline points={P([350,530,320,570,310,545],D6)} fill="none" stroke="#b08a3c" strokeWidth="1" strokeDasharray="3 2" />
      <polygon points={P(BIG)} fill="#fe9a8a" stroke="#e8002f" strokeWidth="2.8" />
      <polygon points={P(LEFT)} fill="#fe9a8a" stroke="#6d211c" strokeWidth="1.2" />
      {RED5.map((a, i) => <polyline key={i} points={P(a)} fill="none" stroke="#e8002f" strokeWidth="2.8" strokeLinejoin="round" />)}
      {RED6.map((a, i) => <polyline key={i} points={P(a, D6)} fill="none" stroke="#e8002f" strokeWidth="2.8" strokeLinejoin="round" />)}
      <polyline points={P([925,225,935,195,1330,260,1410,600,1475,997],D6)} fill="none" stroke="#5c1c18" strokeWidth="1" />
      <MapLabels list={LABELS5} />
      <MapLabels list={LABELS6} d={D6} />
      <Mosque x={1420} y={373} /><Mosque x={68} y={68} d={D6} /><Mosque x={555} y={270} d={D6} /><Mosque x={703} y={873} d={D6} />
      <rect x={fx(614)} y={fy(845+D6)} width="8" height="9" fill="#b03cc4" />
      <circle cx={fx(238)} cy={fy(176+D6)} r="1.5" fill="#d0781c" /><circle cx={fx(663)} cy={fy(880+D6)} r="1.5" fill="#d0781c" />
      <path d={`M${fx(750)} ${fy(330+D6)}v11m-3 0h6m-6-8h6`} stroke="#667" strokeWidth="1.2" fill="none" />
    </g>
  </svg>
);

/* ---------- left dock trees ---------- */
const BrowserTree = () => (
  <TreeBox $mt={5}>
    <TreeBody>
      <TreeRow><Expander /><TreeIcon><svg width="26" height="26" viewBox="0 0 24 24"><path d="M12 1l3.2 7.3 7.8.7-6 5.2 1.9 7.8L12 18l-6.9 4 1.9-7.8L1 9l7.8-.7z" fill="#fbe86e" stroke="#d8ac14" strokeWidth="1.3" /></svg></TreeIcon>Favorites</TreeRow>
      <TreeRow><Expander $show /><TreeIcon><svg width="24" height="24" viewBox="0 0 24 24"><Scroll /><path d="M13 2h6v11l-3-3-3 3z" fill="#4a7fb5" /></svg></TreeIcon>Spatial Bookmarks</TreeRow>
      <TreeRow><Expander $show /><TreeIcon><svg width="24" height="24" viewBox="0 0 24 24"><path d="M2 3h8l2 3h10v16H2z" fill="#b9d65c" stroke="#888" /><path d="M2 8l20 14M12 12l5-4 4 4-5 4z" fill="#2f8d2f" stroke="#fff" /></svg></TreeIcon>Project Home</TreeRow>
      <TreeRow><Expander $show /><TreeIcon><svg width="24" height="24" viewBox="0 0 24 24"><path d="M2 3h8l2 3h10v16H2z" fill="#f2f2f2" stroke="#888" /><path d="M5 14l7-6 7 6M8 13v6h8v-6" fill="none" stroke="#333" strokeWidth="1.4" /></svg></TreeIcon>Home</TreeRow>
      <TreeRow><Expander /><TreeIcon><svg width="24" height="24" viewBox="0 0 24 24"><path d="M2 3h8l2 3h10v16H2z" fill="#f2f2f2" stroke="#888" /></svg></TreeIcon></TreeRow>
    </TreeBody>
    <VBar><BarBtn $dir="up" /><BarTrack $top={39} $len={32} /><BarBtn $dir="down" /></VBar>
  </TreeBox>
);
const LayersTree = () => (
  <TreeBox $mt={5}>
    <TreeBody>
      <LayerRows>
        <LayerRow><LayerCheck /><Swatch $c="#f79fd8" $b="#a66" /><LayerName $muted>Gedung</LayerName></LayerRow>
        <LayerRow $sel><LayerCheck><Tick /></LayerCheck><Swatch $c="#44c78f" $b="#2d6e52"><svg width="16" height="18" viewBox="0 0 16 18"><path d="M12 1l3 2-9 12-4 2 1-4z" fill="#b7bda0" stroke="#667" strokeWidth=".6" /></svg></Swatch><LayerName $active>Rumah Sakit</LayerName></LayerRow>
        <LayerRow><LayerCheck><Tick /></LayerCheck><Swatch $c="#fe9a8a" $b="#c0392b" /><LayerName>Universitas</LayerName></LayerRow>
        <LayerRow><LayerCheck><Tick /></LayerCheck>
          <svg width="22" height="21" viewBox="0 0 4 4"><rect width="4" height="4" fill="#fff" /><rect x="2" y="0" width="1" height="1" fill="#263a54" /><rect x="1" y="0" width="1" height="1" fill="#a5bcd6" /><rect x="3" y="1" width="1" height="1" fill="#a5bcd6" /><rect x="0" y="1" width="1" height="1" fill="#a5bcd6" /><rect x="1" y="2" width="1" height="1" fill="#263a54" /><rect x="2" y="2" width="1" height="1" fill="#a5bcd6" /><rect x="0" y="3" width="1" height="1" fill="#263a54" /></svg>
          <LayerName>Screenshot 2025-03-09</LayerName><Tip>?</Tip></LayerRow>
      </LayerRows>
    </TreeBody>
    <VBar $short><BarBtn $dir="up" /><BarTrack $top={0} $len={8} /><BarBtn $dir="down" /></VBar>
    <HBar><BarBtn $dir="left" /><HTrack /><BarBtn $dir="right" /><HCorner /></HBar>
  </TreeBox>
);

const PANELS: [string, boolean][] = [
  ["Advanced Digitizing Panel", false], ["Browser (2) Panel", false], ["Browser Panel", true], ["Debugging/Development Tools Panel", false], ["GPS Information Panel", false],
  ["Layer Order Panel", false], ["Layer Styling Panel", false], ["Layers Panel", true], ["Log Messages Panel", false], ["OSM place search... Panel", true], ["Overview Panel", false],
  ["Processing Toolbox Panel", false], ["Results Viewer Panel", false], ["Spatial Bookmark Manager Panel", false], ["Statistics Panel", false], ["Temporal Controller Panel", false],
  ["Tile Scale Panel", false], ["Undo/Redo Panel", false],
];
const TOOLBARS: [string, boolean][] = [
  ["Advanced Digitizing Toolbar", true], ["Attributes Toolbar", true], ["Data Source Manager Toolbar", true], ["Database Toolbar", false], ["Digitizing Toolbar", true], ["Help Toolbar", true],
  ["Label Toolbar", true], ["Manage Layers Toolbar", false], ["Map Navigation Toolbar", true], ["Plugins Toolbar", true], ["Project Toolbar", true], ["QuickOSM", true], ["Raster Toolbar", true],
];
const MORE = ["Selection Toolbar", "Shape Digitizing Toolbar", "Snapping Toolbar", "Vector Toolbar", "Web Toolbar"];
const MenuItem = ({ label, on, hi }: { label: string; on: boolean; hi?: boolean }) => (
  <MenuRow $hi={hi}><MenuCheck>{on ? <Tick /> : null}</MenuCheck>{label}</MenuRow>
);

const MENUS: React.ReactNode[] = [
  <>Pro<u>j</u>ect</>, <><u>E</u>dit</>, <><u>V</u>iew</>, <><u>L</u>ayer</>, <><u>S</u>ettings</>, <><u>P</u>lugins</>, <>Vect<u>o</u>r</>, <><u>R</u>aster</>, <><u>D</u>atabase</>, <><u>W</u>eb</>, <><u>M</u>esh</>, <>Pro<u>c</u>essing</>, <><u>H</u>elp</>,
];

export default function App() {
  return (
    <Page>
      <Global />
      <TitleBar><QgisLogo />*tugasdigitizing — QGIS</TitleBar>
      <MenuBar>{MENUS.map((m, i) => <MenuLabel key={i}>{m}</MenuLabel>)}</MenuBar>
      {ROWS.map((r, i) => <Toolbar key={i} items={r} />)}
      <Workspace>
        <Dock>
          <DockTitle>Browser<DockBtns /></DockTitle>
          <MiniRow><Mini id="newTree" /><Mini id="refresh" /><Mini id="filter" /><Mini id="collapse" /><Mini id="info" /></MiniRow>
          <BrowserTree />
          <Splitter $h={9} />
          <DockTitle>Layers<DockBtns /></DockTitle>
          <MiniRow><Mini id="brush" /><Mini id="addGroup" /><Mini id="eye" /><Mini id="filter" /><Mini id="epsilon" /><MiniCaret /><Mini id="expand" /><Mini id="collapse" /><Mini id="remove" /></MiniRow>
          <LayersTree />
          <Splitter $h={7} />
          <DockTitle>OSM place search...<DockBtns /></DockTitle>
          <OsmBody>
            <OsmLine $mb={10}><OsmLabel>Name contains...</OsmLabel><TextInput $w={106}>Makassar</TextInput><GhostBtn $ml={10}>-&gt;</GhostBtn></OsmLine>
            <OsmLine $mb={9}><BoxCheck /><CheckText>Limit to extent</CheckText><GhostBtn $ml={0}>&lt;-</GhostBtn></OsmLine>
            <ResultTable>
              <HeadRow><HeadCell $w={82}>Name</HeadCell><HeadCell $w={74}>Class</HeadCell><HeadCell $w={75}>Infos</HeadCell></HeadRow>
            </ResultTable>
            <OsmButtons>
              <IconBtn><svg width="24" height="24" viewBox="0 0 24 24"><rect x="2" y="1" width="20" height="22" fill="#5d8ec4" /><rect x="2" y="1" width="5" height="22" fill="#1f3550" /><text x="14.5" y="17" fontSize="14" textAnchor="middle" fill="#fff" fontFamily={FONT}>?</text></svg></IconBtn>
              <IconBtn><svg width="26" height="26" viewBox="0 0 24 24"><rect x="1" y="1" width="22" height="22" fill="#e8e8d8" /><path d="M2 14l10-3 10 11H6z" fill="#2f9a8c" /><path d="M5 15l10 6M9 12l3 9M12 16l6-2" stroke="#e2d43a" strokeWidth="1.4" fill="none" /><circle cx="16" cy="7" r="6" fill="#2e7d32" stroke="#fff" /><path d="M16 3.5v7M12.5 7h7" stroke="#fff" strokeWidth="1.6" /></svg></IconBtn>
              <IconBtn><svg width="26" height="26" viewBox="0 0 24 24"><rect x="1" y="1" width="22" height="22" fill="#3a3a3a" /><path d="M4 6c2-3 7-3 9-2l2 6-2 2 1 5-3 4-2-4-1-3-4-2z" fill="#fff" /><circle cx="17" cy="7" r="6" fill="#2e7d32" stroke="#fff" /><path d="M17 3.5v7M13.5 7h7" stroke="#fff" strokeWidth="1.6" /></svg></IconBtn>
              <ZoomBtn><svg width="24" height="18" viewBox="0 0 24 18"><path d="M1 6h13V1l9 8-9 8v-5H1z" fill="#8fce3e" stroke="#6c9c30" /></svg>Zoom</ZoomBtn>
            </OsmButtons>
          </OsmBody>
        </Dock>
        <Canvas><OsmMap /></Canvas>
      </Workspace>
      <StatusBar>
        <Locator><svg width="15" height="15" viewBox="0 0 15 15"><circle cx="6" cy="6" r="4.5" fill="none" stroke="#999" strokeWidth="1.3" /><path d="M9.5 9.5L14 14" stroke="#999" strokeWidth="1.6" /></svg>Type to locate (Ctrl+K)</Locator>
        <CoordLabel>Coordinate</CoordLabel>
        <CoordInput>792,-1</CoordInput>
        <ToolSlot><svg width="26" height="28" viewBox="0 0 24 26"><ellipse cx="11" cy="14" rx="7" ry="10" fill="#fff" stroke="#111" strokeWidth="2.6" transform="rotate(-25 11 14)" /><path d="M6 6l9 13M13 6L7 18" stroke="#111" strokeWidth="2.6" /><circle cx="14" cy="19" r="3.4" fill="#fff" stroke="#111" strokeWidth="1.8" /><path d="M19 5l1-2M21 9l2-1" stroke="#111" strokeDasharray="1.5 1" /></svg></ToolSlot>
        <ScaleLabel>Scale</ScaleLabel>
      </StatusBar>
      <Taskbar>
        <TaskIcon $w={94}>
          <svg width="40" height="36" viewBox="0 0 40 36"><path d="M8 26c-5 0-7-3-7-6s3-6 7-6c2-5 6-7 11-7s9 3 10 7c4 0 7 3 7 6s-3 6-7 6z" fill="#b5d0f5" /><path d="M21 18l8 8-4 2 2 6h-4l-2-6z" fill="#2680f4" /></svg>
          <Badge>4</Badge>
        </TaskIcon>
        <TaskIcon $w={36} $ml={151}>
          <svg width="36" height="36" viewBox="0 0 36 36"><rect x="1" y="1" width="16" height="16" rx="1.5" fill="#3cc5f5" /><rect x="19" y="1" width="16" height="16" rx="1.5" fill="#1ea7ea" /><rect x="1" y="19" width="16" height="16" rx="1.5" fill="#119ae0" /><rect x="19" y="19" width="16" height="16" rx="1.5" fill="#0a82d0" /></svg>
        </TaskIcon>
        <SearchPill>
          <svg width="26" height="26" viewBox="0 0 24 24"><circle cx="10.5" cy="10" r="7.5" fill="none" stroke="#222" strokeWidth="2.2" /><path d="M15.5 16l6 6.5" stroke="#222" strokeWidth="2.4" /></svg>
          Search
          <CastleWrap>
            <svg width="70" height="40" viewBox="0 0 70 40"><ellipse cx="35" cy="32" rx="33" ry="6" fill="#5aa8b8" /><rect x="8" y="13" width="10" height="19" fill="#dcb98a" /><path d="M7 13l6-10 6 10z" fill="#6883a5" /><rect x="19" y="17" width="9" height="15" fill="#e1c295" /><path d="M18 17l5-9 6 9z" fill="#55769c" /><rect x="28" y="21" width="24" height="11" fill="#e8cfa5" /><path d="M28 21l4-6h16l4 6z" fill="#5f7c9e" /><rect x="52" y="16" width="10" height="16" fill="#dcb98a" /><path d="M51 16l6-8 6 8z" fill="#3b6b96" /><ellipse cx="4" cy="30" rx="4" ry="5" fill="#64a66a" /></svg>
          </CastleWrap>
        </SearchPill>
        <TaskIcon $w={66}>
          <svg width="36" height="36" viewBox="0 0 36 36"><rect x="2" y="13" width="24" height="23" rx="2" fill="#2a2a2a" /><rect x="10" y="2" width="24" height="24" rx="2" fill="#f4f4f4" opacity=".9" /><rect x="10" y="13" width="16" height="13" fill="#bbb" /></svg>
        </TaskIcon>
        <TaskIcon $w={72}>
          <svg width="36" height="40" viewBox="0 0 36 40"><path d="M10 7c0-6 16-6 16 0" fill="none" stroke="#2aa9e8" strokeWidth="2" /><rect x="1" y="7" width="34" height="32" rx="4" fill="#0f4e90" /><rect x="11" y="14" width="7" height="7" fill="#e8502a" /><rect x="19" y="14" width="7" height="7" fill="#77b82a" /><rect x="11" y="22" width="7" height="7" fill="#1e9ae0" /><rect x="19" y="22" width="7" height="7" fill="#fbb812" /></svg>
        </TaskIcon>
        <TaskIcon $w={72}>
          <svg width="46" height="50" viewBox="0 0 46 50"><circle cx="19" cy="27" r="17" fill="#1388c9" stroke="#fff" strokeWidth="1.5" /><text x="19" y="37" fontSize="28" fontWeight="700" textAnchor="middle" fill="#fff" fontFamily={FONT}>?</text><circle cx="32" cy="13" r="11.5" fill="#fbbc05" /></svg>
        </TaskIcon>
        <TaskIcon $w={50}>
          <svg width="36" height="40" viewBox="0 0 36 40"><rect width="36" height="40" fill="#0f96d9" /><text x="18" y="24" fontSize="12" textAnchor="middle" fill="#fff" fontFamily={FONT} fontStyle="italic">my<tspan fontWeight="700" fontSize="15">hp</tspan></text></svg>
        </TaskIcon>
        <TaskIcon $w={66} $ml={8}>
          <svg width="36" height="36" viewBox="0 0 36 36"><circle cx="18" cy="18" r="18" fill="#1ed760" /><path d="M7 12c8-2 15-1 22 2M9 18c7-2 13-1 18 2M10 24c6-1 11-1 15 2" fill="none" stroke="#111" strokeWidth="3" strokeLinecap="round" /></svg>
          <RunDot />
        </TaskIcon>
        <TaskIcon $w={66}>
          <svg width="38" height="42" viewBox="0 0 38 42"><path d="M1 2h14l4 4h18v36H1z" fill="#d9a21a" /><rect x="1" y="7" width="36" height="35" fill="#f9d45c" /><rect x="11" y="27" width="16" height="15" rx="3" fill="#1680d4" /><rect x="14" y="31" width="10" height="2" fill="#0c4f8e" /></svg>
          <RunDot />
        </TaskIcon>
        <TaskIcon $w={66}>
          <svg width="38" height="42" viewBox="0 0 38 42"><path d="M19 1C8 1 1 9 1 20c0 12 9 21 20 21 7 0 12-2 16-7-8 4-19 1-18-8 0-4 4-7 8-7 6 0 10 2 10-5S29 1 19 1z" fill="#0f7fd6" /><path d="M19 1c9 0 18 6 18 13 0 7-4 5-10 5-2-6-9-7-13-4-4 3-5 8-4 12C4 21 7 3 19 1z" fill="#38c79d" /></svg>
        </TaskIcon>
        <TaskIcon $w={62}>
          <svg width="36" height="38" viewBox="0 0 36 38"><circle cx="18" cy="19" r="17" fill="#25a84d" /></svg>
        </TaskIcon>
      </Taskbar>
      <ViewMenu>
        <MenuCol $w={401}>
          <MenuHead>Panels</MenuHead>
          {PANELS.map(([l, c]) => <MenuItem key={l} label={l} on={c} />)}
          <MenuDivider />
          <MenuHeadT>Toolbars</MenuHeadT>
          {TOOLBARS.map(([l, c], i) => <MenuItem key={l} label={l} on={c} hi={i === 0} />)}
        </MenuCol>
        <MenuCol $w={400} $pt={1}>
          {MORE.map(l => <MenuItem key={l} label={l} on />)}
        </MenuCol>
      </ViewMenu>
    </Page>
  );
}
